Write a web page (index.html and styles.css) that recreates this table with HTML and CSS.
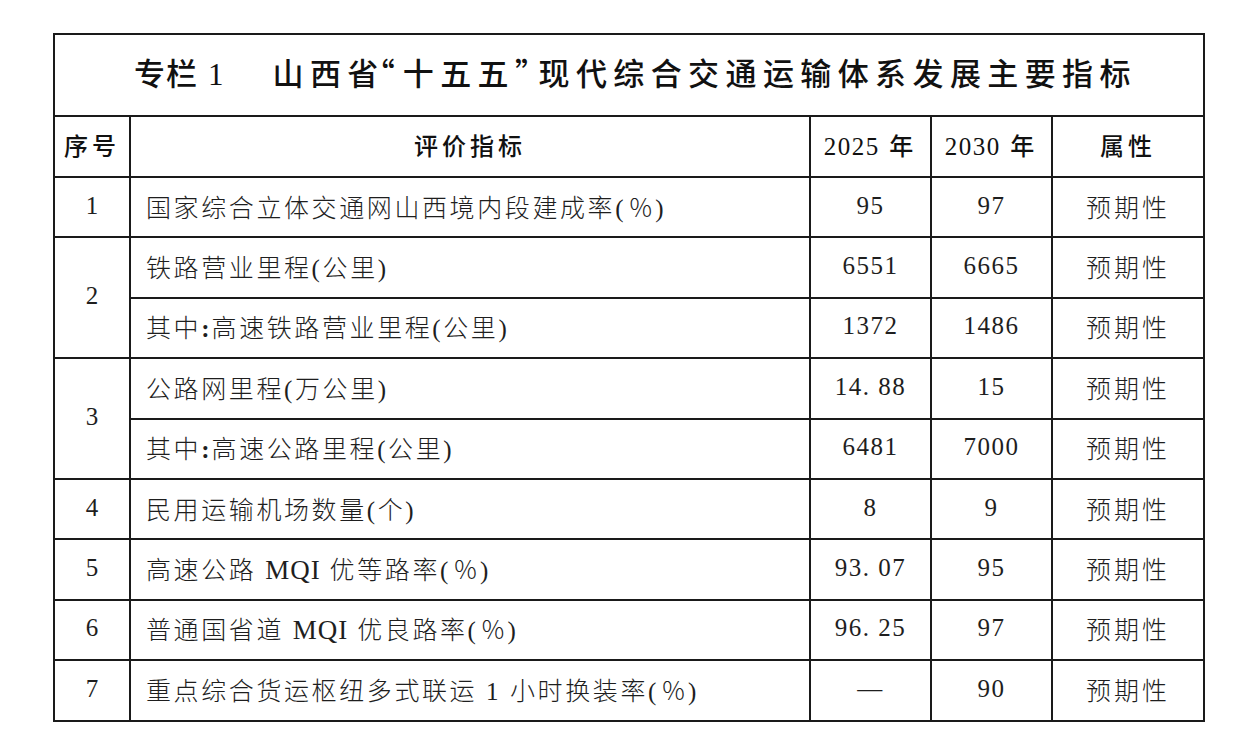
FILE: index.html
```html
<!DOCTYPE html>
<html lang="zh-CN">
<head>
<meta charset="utf-8">
<title>专栏1 山西省“十五五”现代综合交通运输体系发展主要指标</title>
<link rel="stylesheet" href="styles.css">
</head>
<body>
<table class="tbl">
  <colgroup>
    <col class="c-no">
    <col class="c-name">
    <col class="c-y1">
    <col class="c-y2">
    <col class="c-attr">
  </colgroup>
  <thead>
    <tr class="r-title">
      <th colspan="5" class="title"><span class="t-lead">专栏<span class="t-num">1</span></span><span class="t-main">山西<span class="t-tight">省</span><span class="q">“</span>十五五<span class="q">”</span>现代综合交通运输体系发展主要指标</span></th>
    </tr>
    <tr class="r-head">
      <th class="h">序号</th>
      <th class="h">评价指标</th>
      <th class="h"><span class="yr">2025</span> 年</th>
      <th class="h"><span class="yr">2030</span> 年</th>
      <th class="h">属性</th>
    </tr>
  </thead>
  <tbody>
    <tr>
      <td class="no">1</td>
      <td class="name">国家综合立体交通网山西境内段建成率(<span class="pc">％</span>)</td>
      <td class="num">95</td>
      <td class="num">97</td>
      <td class="attr">预期性</td>
    </tr>
    <tr>
      <td class="no" rowspan="2">2</td>
      <td class="name">铁路营业里程(公里)</td>
      <td class="num">6551</td>
      <td class="num">6665</td>
      <td class="attr">预期性</td>
    </tr>
    <tr>
      <td class="name">其中<span class="colon">:</span>高速铁路营业里程(公里)</td>
      <td class="num">1372</td>
      <td class="num">1486</td>
      <td class="attr">预期性</td>
    </tr>
    <tr>
      <td class="no" rowspan="2">3</td>
      <td class="name">公路网里程(万公里)</td>
      <td class="num">14. 88</td>
      <td class="num">15</td>
      <td class="attr">预期性</td>
    </tr>
    <tr>
      <td class="name">其中<span class="colon">:</span>高速公路里程(公里)</td>
      <td class="num">6481</td>
      <td class="num">7000</td>
      <td class="attr">预期性</td>
    </tr>
    <tr>
      <td class="no">4</td>
      <td class="name">民用运输机场数量(个)</td>
      <td class="num">8</td>
      <td class="num">9</td>
      <td class="attr">预期性</td>
    </tr>
    <tr>
      <td class="no">5</td>
      <td class="name">高速公路 <span class="lat">MQI</span> 优等路率(<span class="pc">％</span>)</td>
      <td class="num">93. 07</td>
      <td class="num">95</td>
      <td class="attr">预期性</td>
    </tr>
    <tr>
      <td class="no">6</td>
      <td class="name">普通国省道 <span class="lat">MQI</span> 优良路率(<span class="pc">％</span>)</td>
      <td class="num">96. 25</td>
      <td class="num">97</td>
      <td class="attr">预期性</td>
    </tr>
    <tr>
      <td class="no">7</td>
      <td class="name">重点综合货运枢纽多式联运 1 小时换装率(<span class="pc">％</span>)</td>
      <td class="num dash">—</td>
      <td class="num">90</td>
      <td class="attr">预期性</td>
    </tr>
  </tbody>
</table>
</body>
</html>
```

FILE: styles.css
```css
html, body {
  margin: 0;
  padding: 0;
  background: #ffffff;
}

body {
  padding: 33px 0 0 53px;
  color: #1e1e1e;
  font-family: "Liberation Serif", "Noto Sans CJK SC", serif;
}

.tbl {
  border-collapse: collapse;
  table-layout: fixed;
  width: 1152px;
}

.c-no { width: 76px; }
.c-name { width: 680px; }
.c-y1 { width: 121px; }
.c-y2 { width: 121px; }
.c-attr { width: 152px; }

.tbl th,
.tbl td {
  border: 2px solid #1a1a1a;
  padding: 0;
  vertical-align: middle;
}

.r-title { height: 82px; }
.r-head { height: 61px; }
.tbl tbody tr { height: 60.4px; }

.tbl .title {
  font-family: "Noto Sans CJK SC", sans-serif;
  font-weight: 500;
  font-size: 31px;
  color: #111;
  text-align: left;
  padding: 0 0 8px 79px;
  white-space: nowrap;
}

.t-lead {
  letter-spacing: 1px;
}

.t-num {
  font-family: "Liberation Serif", serif;
  font-weight: 400;
  font-size: 31px;
  margin-left: 10px;
  margin-right: 48px;
}

.t-main {
  letter-spacing: 6.4px;
}

.t-tight {
  letter-spacing: 1px;
}

.q {
  font-feature-settings: "halt" 1;
  letter-spacing: 8px;
}

.tbl .h {
  font-family: "Noto Sans CJK SC", sans-serif;
  font-weight: 500;
  font-size: 24px;
  letter-spacing: 4px;
  text-align: center;
  color: #111;
  padding-bottom: 5px;
}

.yr {
  font-family: "Liberation Serif", serif;
  font-weight: 400;
  font-size: 25px;
  letter-spacing: 1.5px;
}

.tbl td {
  font-size: 25px;
  font-weight: 300;
  padding-bottom: 3px;
}

.no {
  text-align: center;
}

.tbl .name {
  padding-left: 15px;
  letter-spacing: 2.6px;
  white-space: nowrap;
}

.colon {
  font-weight: 700;
  letter-spacing: 2px;
}

.lat {
  font-size: 27px;
  letter-spacing: 1px;
}

.pc {
  font-family: "Noto Sans CJK SC", sans-serif;
  font-weight: 300;
  letter-spacing: 2px;
  margin-left: 2px;
}

.num {
  text-align: center;
  letter-spacing: 1.5px;
}

.attr {
  text-align: center;
  letter-spacing: 3px;
}
```
